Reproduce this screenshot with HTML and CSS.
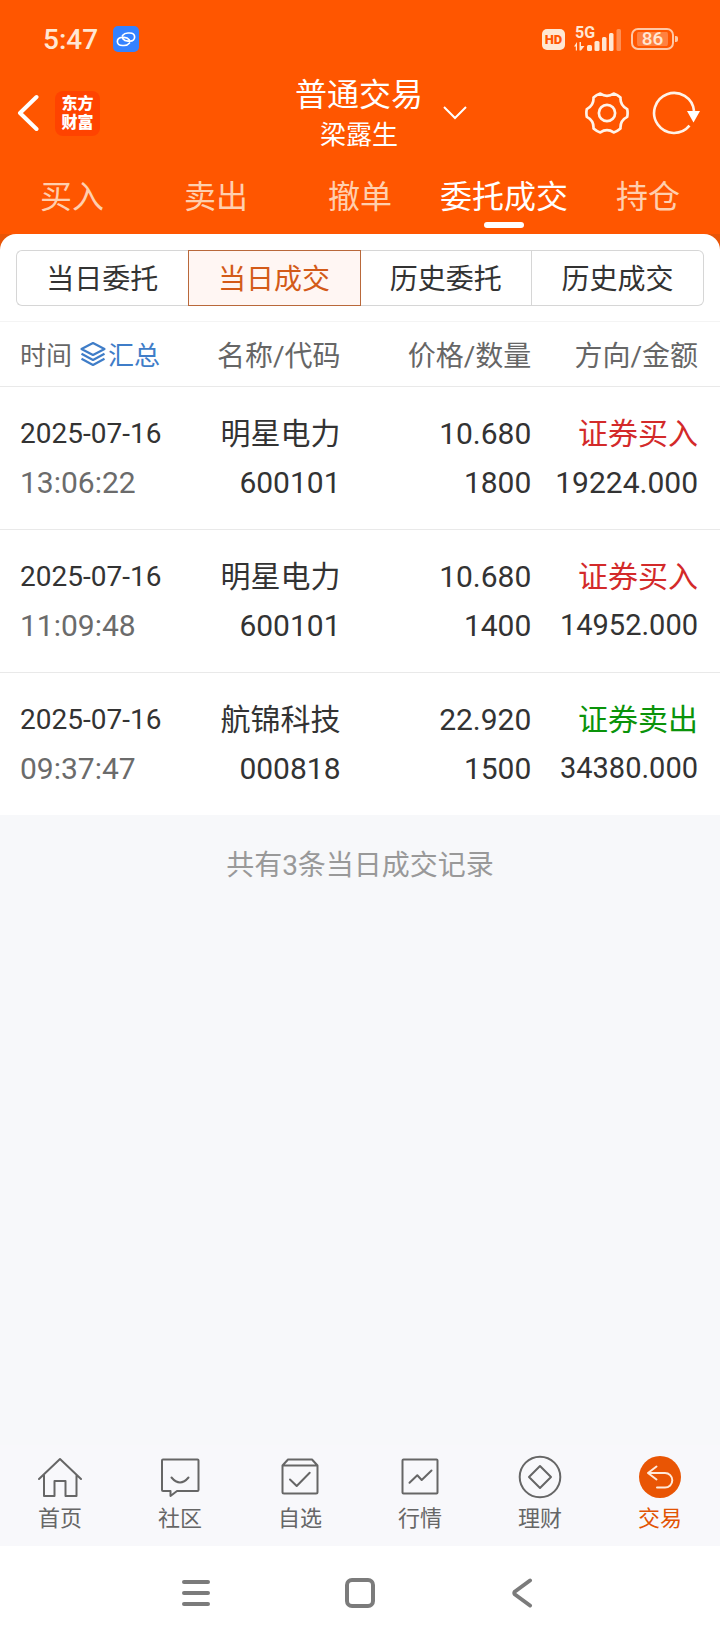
FILE: index.html
```
<!DOCTYPE html>
<html lang="zh-CN">
<head>
	<title>普通交易</title>
	<meta charset="UTF-8">
	<meta name="viewport" content="width=device-width, initial-scale=1">
	<link rel="stylesheet" href="styles.css">
</head>
<body>
	<header class="top">
		<div class="status">
			<span class="clock">5:47</span>
			<svg class="link-icon" viewBox="0 0 26 26">
				<rect width="26" height="26" rx="5" fill="#3482ff"/>
				<path d="M9.500 9.500Q11.500 7 15 7H16.500C23.500 7 23 15 17 15.200H15Q11.500 15 9.800 12.800M16.500 17Q14.500 19.500 11 19.500H9.500C2.500 19.500 3 11.500 9 11.300H11Q14.500 11.500 16.200 13.700" fill="none" stroke="#fff" stroke-width="1.700" stroke-linecap="round"/>
			</svg>
			<div class="status-right">
				<span class="hd">HD</span>
				<div class="signal">
					<span class="net">5G</span>
					<svg class="bars" viewBox="0 0 48 24">
						<g fill="#ffe7d3">
							<path d="M0 19.500 3 15V23.500H1.800V19.500ZM5.500 15H7V19H10.500L7 23.500H5.500Z"/>
							<rect x="13" y="18" width="5" height="6" rx="1.500"/>
							<rect x="20.500" y="14" width="5" height="10" rx="1.500"/>
							<rect x="28" y="10" width="4.500" height="14" rx="1.500"/>
							<rect x="35" y="6" width="4.500" height="18" rx="1.500"/>
							<rect x="42.500" y="2" width="4.500" height="22" rx="1.500" opacity=".4"/>
						</g>
					</svg>
				</div>
				<span class="battery">86</span>
			</div>
		</div>

		<div class="titlebar">
			<div class="title-left">
				<button class="icon-btn" aria-label="返回">
					<svg width="22" height="38" viewBox="0 0 22 38"><path d="M19.500 3 3 19 19.500 35" fill="none" stroke="#fff" stroke-width="4" stroke-linecap="round" stroke-linejoin="round"/></svg>
				</button>
				<a class="logo" href="#">东方<br>财富</a>
			</div>
			<h1 class="title">普通交易<small>梁露生</small></h1>
			<div class="title-right">
				<button class="icon-btn" aria-label="切换账户">
					<svg width="24" height="14" viewBox="0 0 24 14"><path d="M1 1 12 12 23 1" fill="none" stroke="#fff" stroke-width="2"/></svg>
				</button>
				<div class="tools">
					<button class="icon-btn" aria-label="设置">
						<svg width="44" height="44" viewBox="-23 -23 46 46" fill="none" stroke="#fff3e8" stroke-width="2.800" stroke-linejoin="round">
							<path d="M21.100-4.100Q22 0 21.100 4.100Q13.600 7.900 14.100 16.200Q11 19 7 20.300Q0 15.700-7 20.300Q-11 19-14.100 16.200Q-13.600 7.900-21.100 4.100Q-22 0-21.100-4.100Q-13.600-7.900-14.100-16.200Q-11-19-7-20.300Q0-15.700 7-20.300Q11-19 14.100-16.200Q13.600-7.900 21.100-4.100Z"/>
							<circle r="8.500"/>
						</svg>
					</button>
					<button class="icon-btn" aria-label="刷新">
						<svg width="49" height="44" viewBox="-22 -22 49 44">
							<path d="M20-2A20 20 0 1 0 15.500 12.700" fill="none" stroke="#fff3e8" stroke-width="2.600"/>
							<path d="M13-2H26L19.500 9.500Z" fill="#fff"/>
						</svg>
					</button>
				</div>
			</div>
		</div>

		<nav class="tabs">
			<a href="#">买入</a>
			<a href="#">卖出</a>
			<a href="#">撤单</a>
			<a href="#" class="active">委托成交</a>
			<a href="#">持仓</a>
		</nav>
	</header>

	<main>
		<div class="sheet-back">
			<section class="sheet">
				<div class="segments">
					<button>当日委托</button>
					<button class="active">当日成交</button>
					<button>历史委托</button>
					<button>历史成交</button>
				</div>
				<table class="deals">
					<thead>
						<tr>
							<th class="col-time">
								<div class="time-head">
									时间
									<button class="summary">
										<svg width="26" height="26" viewBox="0 0 26 26" fill="none" stroke="#3f7dc8" stroke-width="2.200" stroke-linejoin="round">
											<path d="M13 2 24.500 8 13 14 1.500 8Z"/>
											<path d="M1.500 12.800 13 19 24.500 12.800M1.500 17.800 13 24 24.500 17.800"/>
										</svg>汇总
									</button>
								</div>
							</th>
							<th class="col-name">名称/代码</th>
							<th class="col-price">价格/数量</th>
							<th class="col-amount">方向/金额</th>
						</tr>
					</thead>
					<tbody>
						<tr>
							<td><div class="date">2025-07-16</div><div class="time">13:06:22</div></td>
							<td><div>明星电力</div><div>600101</div></td>
							<td><div>10.680</div><div>1800</div></td>
							<td><div class="buy">证券买入</div><div>19224.000</div></td>
						</tr>
						<tr>
							<td><div class="date">2025-07-16</div><div class="time">11:09:48</div></td>
							<td><div>明星电力</div><div>600101</div></td>
							<td><div>10.680</div><div>1400</div></td>
							<td><div class="buy">证券买入</div><div class="shrink">14952.000</div></td>
						</tr>
						<tr>
							<td><div class="date">2025-07-16</div><div class="time">09:37:47</div></td>
							<td><div>航锦科技</div><div>000818</div></td>
							<td><div>22.920</div><div>1500</div></td>
							<td><div class="sell">证券卖出</div><div class="shrink">34380.000</div></td>
						</tr>
					</tbody>
				</table>
			</section>
		</div>
		<p class="total">共有3条当日成交记录</p>
	</main>

	<nav class="tabbar">
		<a href="#">
			<svg viewBox="0 0 44 44"><path d="M1 24 22 4 43 24M6 20V41H16.500V26H27.500V41H38.500V20"/></svg>
			首页
		</a>
		<a href="#">
			<svg viewBox="0 0 44 44"><path d="M5 4.500H39.500Q40.500 4.500 40.500 5.500V35Q40.500 36 39.500 36H19L12.500 41V36H5Q4 36 4 35V5.500Q4 4.500 5 4.500ZM13.500 22.500Q22 32.500 30.500 22.500"/></svg>
			社区
		</a>
		<a href="#">
			<svg viewBox="0 0 44 44"><path d="M4.500 10.500H39.500V37Q39.500 38.500 38 38.500H6Q4.500 38.500 4.500 37ZM4.500 10.500 10 4.500H34L39.500 10.500M12 24.500 18.700 31 31.700 17.700"/></svg>
			自选
		</a>
		<a href="#">
			<svg viewBox="0 0 44 44"><rect x="4.500" y="4.500" width="35" height="34" rx="1"/><path d="M11.500 27.700 19.300 20.300 23.700 25 33.500 15.500"/></svg>
			行情
		</a>
		<a href="#">
			<svg viewBox="0 0 44 44"><circle cx="22" cy="22" r="20.300"/><path d="M22 11 33 22 22 33 11 22Z"/></svg>
			理财
		</a>
		<a href="#" class="active">
			<svg viewBox="0 0 44 44"><circle class="disc" cx="22" cy="22" r="21"/><path class="arrow" d="M18.500 11.500 10 18 18.500 24.500M10 18H27A7.300 7.300 0 0 1 27 32.600H19"/></svg>
			交易
		</a>
	</nav>

	<div class="sysnav">
		<button aria-label="菜单">
			<svg width="30" height="30" viewBox="0 0 30 30"><path d="M3 4H27M3 15H27M3 26H27"/></svg>
		</button>
		<button aria-label="主屏幕">
			<svg width="30" height="30" viewBox="0 0 30 30"><rect x="2" y="2" width="26" height="26" rx="5"/></svg>
		</button>
		<button aria-label="后退">
			<svg width="30" height="30" viewBox="0 0 30 30"><path d="M21 2.500 6 13.500Q4.500 15 6 16.500L21 27.500"/></svg>
		</button>
	</div>
</body>
</html>
```

FILE: styles.css
```
* {
	box-sizing: border-box;
}
body {
	margin: 0;
	min-height: 100vh;
	display: flex;
	flex-direction: column;
	font-family: Roboto, "Noto Sans CJK SC", sans-serif;
	color: #333;
	background: #f7f8fa;
}
a {
	color: inherit;
	text-decoration: none;
}
button {
	margin: 0;
	padding: 0;
	border: 0;
	background: none;
	font: inherit;
	color: inherit;
	cursor: pointer;
}
svg {
	display: block;
}

/* Header */
.top {
	background: #ff5600;
	color: #fff;
}
.status {
	display: flex;
	align-items: center;
	height: 71px;
	padding: 7px 46px 0 43px;
	color: #ffe7d3;
}
.clock {
	font-size: 28px;
	font-weight: 500;
}
.link-icon {
	width: 26px;
	height: 26px;
	margin-left: 15px;
}
.status-right {
	display: flex;
	align-items: center;
	margin-left: auto;
}
.hd {
	width: 23px;
	border-radius: 5px;
	background: #ffe7d3;
	color: #ff5600;
	font-size: 13px;
	font-weight: 900;
	line-height: 21px;
	text-align: center;
}
.signal {
	position: relative;
	margin: 0 9px;
}
.bars {
	width: 48px;
	height: 24px;
}
.net {
	position: absolute;
	left: 1px;
	top: -2px;
	font-size: 16px;
	font-weight: 700;
	line-height: 15px;
}
.battery {
	position: relative;
	width: 43px;
	border: 2px solid #ffc8a6;
	border-radius: 7px;
	background: #ff8140;
	background-clip: content-box;
	padding: 2px 4px;
	font-size: 19px;
	font-weight: 500;
	line-height: 14px;
	text-align: center;
}
.battery::after {
	content: "";
	position: absolute;
	right: -6px;
	top: 6px;
	width: 3px;
	height: 6px;
	border-radius: 0 2px 2px 0;
	background: #ffc8a6;
}

.titlebar {
	display: grid;
	grid-template-columns: 1fr auto 1fr;
	align-items: center;
	padding: 0 19px 0 17px;
}
.title-left,
.title-right,
.tools {
	display: flex;
	align-items: center;
}
.title-left {
	gap: 16px;
}
.title-right {
	justify-content: space-between;
	padding-left: 20px;
}
.tools {
	gap: 23px;
}
.logo {
	width: 45px;
	padding: 3px 0 4px;
	border-radius: 8px;
	background: #ff4300;
	font-size: 16px;
	font-weight: 900;
	line-height: 19px;
	text-align: center;
}
.title {
	margin: 0;
	padding-top: 4px;
	font-size: 32px;
	font-weight: 400;
	line-height: 40px;
	text-align: center;
}
.title small {
	display: block;
	font-size: 26px;
}

.tabs {
	display: flex;
	padding: 18px 0 6px;
	font-size: 32px;
	line-height: 48px;
	color: #ffcfae;
}
.tabs a {
	flex: 1;
	text-align: center;
	white-space: nowrap;
}
.tabs .active {
	color: #fff;
}
.tabs a::after {
	content: "";
	display: block;
	width: 40px;
	height: 6px;
	margin: 1px auto 0;
	border-radius: 3px;
}
.tabs .active::after {
	background: #fff;
}

/* Sheet */
main {
	flex: 1;
}
.sheet-back {
	background: #e85406;
}
.sheet {
	border-radius: 16px 16px 0 0;
	background: #fff;
}
.segments {
	display: flex;
	padding: 16px 16px 15px;
	border-bottom: 1px solid #f4f4f4;
}
.segments button {
	flex: 1;
	height: 56px;
	padding-bottom: 2px;
	border: 1px solid #d6d6d6;
	border-left-width: 0;
	font-size: 28px;
}
.segments button:first-child {
	border-left-width: 1px;
	border-right-width: 0;
	border-radius: 6px 0 0 6px;
}
.segments button:last-child {
	border-radius: 0 6px 6px 0;
}
.segments .active {
	border: 1px solid #b9683a;
	background: #fff6f3;
	color: #d35a18;
}

.deals {
	width: 100%;
	table-layout: fixed;
	border-collapse: collapse;
	text-align: right;
	white-space: nowrap;
}
.deals th {
	height: 64px;
	padding: 0;
	border-bottom: 1px solid #e9e9e9;
	color: #666;
	font-size: 28px;
	font-weight: 400;
}
.deals td {
	padding: 22px 0;
	font-size: 30px;
	line-height: 49px;
}
.deals tbody tr + tr td {
	border-top: 1px solid #e9e9e9;
}
.deals th:first-child,
.deals td:first-child {
	padding-left: 20px;
	text-align: left;
}
.deals th:last-child,
.deals td:last-child {
	padding-right: 22px;
}
.col-time {
	width: 26%;
}
.col-name {
	width: 21.3%;
}
.col-price {
	width: 26.5%;
}
.col-amount {
	width: 26.2%;
}
.time-head,
.summary {
	display: flex;
	align-items: center;
}
.time-head {
	gap: 8px;
	font-size: 26px;
}
.summary {
	gap: 2px;
	color: #3f7dc8;
}
.deals .date {
	font-size: 28px;
}
.deals .time {
	color: #6b6b6b;
}
.deals .shrink {
	font-size: 29px;
}
.buy {
	color: #d32a2a;
}
.sell {
	color: #0a930a;
}
.total {
	margin: 0;
	padding: 31px 0;
	font-size: 28px;
	line-height: 40px;
	text-align: center;
	color: #999;
}

/* Bottom bars */
.tabbar {
	display: flex;
	padding: 10px 0 12px;
	background: #f8f8fb;
	color: #666;
}
.tabbar a {
	flex: 1;
	display: flex;
	flex-direction: column;
	align-items: center;
	gap: 5px;
	font-size: 22px;
	line-height: 30px;
}
.tabbar svg {
	width: 44px;
	height: 44px;
	fill: none;
	stroke: #666;
	stroke-width: 2;
	stroke-linecap: round;
	stroke-linejoin: round;
}
.tabbar .active {
	color: #e25303;
}
.tabbar .disc {
	fill: #e95504;
	stroke: none;
}
.tabbar .arrow {
	stroke: #ffeadb;
}
.sysnav {
	display: flex;
	justify-content: center;
	height: 94px;
	background: #fff;
}
.sysnav button {
	display: flex;
	align-items: center;
	justify-content: center;
	width: 164px;
}
.sysnav svg {
	fill: none;
	stroke: #7b7b7b;
	stroke-width: 4;
	stroke-linecap: round;
	stroke-linejoin: round;
}
```
